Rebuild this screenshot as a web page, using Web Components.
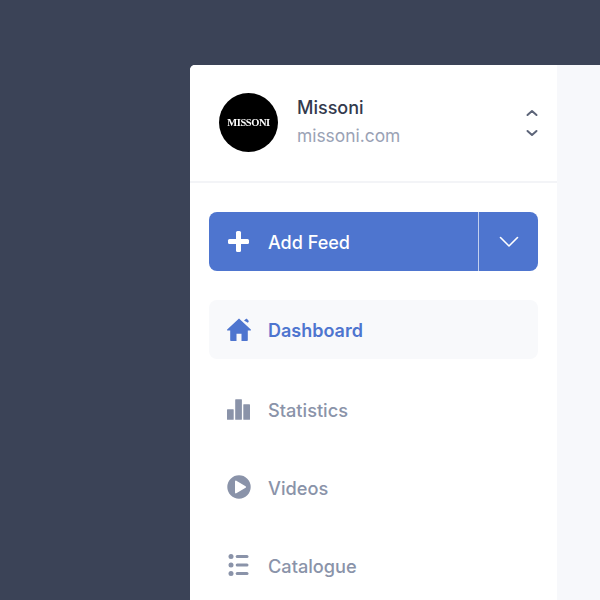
<!doctype html>
<html>
<head>
<meta charset="utf-8">
<style>
  html,body{ margin:0; height:100%; overflow:hidden; background:#3b4357; }
</style>
</head>
<body>
<app-shell>
  <account-header name="Missoni" site="missoni.com"></account-header>
  <add-feed-button label="Add Feed"></add-feed-button>
  <side-nav>
    <nav-item label="Dashboard" active>
      <svg slot="icon" width="26" height="26" viewBox="0 0 26 26" fill="currentColor"><path d="M13 1.500 1.200 12.600c-.4.4-.1 1 .4 1H4.200V23c0 .6.4 1 1 1h5.300v-7.200h5V24h5.300c.6 0 1-.4 1-1v-9.400h2.600c.5 0 .8-.6.4-1z"/><path d="M18 3.400l2.200-1.600c.3-.2.7-.2.9.1l1.500 1.900c.2.3.2.7 0 1l-.7 1z"/></svg>
    </nav-item>
    <nav-item label="Statistics">
      <svg slot="icon" width="26" height="26" viewBox="0 0 26 26" fill="currentColor"><rect x="1" y="13.200" width="6.700" height="10.600" rx=".6"/><rect x="9.200" y="3.200" width="6.700" height="20.600" rx=".6"/><rect x="17.300" y="8.200" width="6.700" height="15.600" rx=".6"/></svg>
    </nav-item>
    <nav-item label="Videos">
      <svg slot="icon" width="26" height="26" viewBox="0 0 26 26"><path fill="currentColor" fill-rule="evenodd" d="M13 1.300a11.700 11.700 0 1 1 0 23.400a11.700 11.700 0 0 1 0-23.400zM9 7.500v11c0 .7.7 1.100 1.300.8l9.300-5.500c.6-.3.6-1.200 0-1.600L10.300 6.700c-.6-.3-1.300.1-1.300.8z"/></svg>
    </nav-item>
    <nav-item label="Catalogue">
      <svg slot="icon" width="26" height="26" viewBox="0 0 26 26" fill="currentColor"><circle cx="5" cy="4.500" r="2.500"/><circle cx="5" cy="13" r="2.500"/><circle cx="5" cy="21.500" r="2.500"/><rect x="9.700" y="3" width="12.800" height="3" rx="1.500"/><rect x="9.700" y="11.500" width="12.800" height="3" rx="1.500"/><rect x="9.700" y="20" width="12.800" height="3" rx="1.500"/></svg>
    </nav-item>
  </side-nav>
</app-shell>

<script>
(() => {
  const FONT = 'Inter, "Liberation Sans", sans-serif';

  class AppShell extends HTMLElement {
    constructor(){
      super();
      this.attachShadow({mode:'open'}).innerHTML = `
        <style>
          :host{ display:block; box-sizing:border-box; height:600px; padding:65px 0 0 190px; overflow:hidden; font-family:${FONT}; }
          .win{ display:flex; height:600px; border-radius:5px 0 0 0; overflow:hidden; background:#f7f8fb; }
          .side{ flex:0 0 367px; background:#fff; }
          .body{ padding:29px 19px 0; display:flex; flex-direction:column; gap:29px; }
          .rest{ flex:1; }
        </style>
        <div class="win">
          <div class="side">
            <slot name="head"></slot>
            <div class="body"><slot></slot></div>
          </div>
          <div class="rest"></div>
        </div>`;
    }
    connectedCallback(){
      const h = this.querySelector('account-header');
      if (h) h.slot = 'head';
    }
  }

  class AccountHeader extends HTMLElement {
    constructor(){
      super();
      this.attachShadow({mode:'open'});
    }
    connectedCallback(){
      const name = this.getAttribute('name'), site = this.getAttribute('site');
      this.shadowRoot.innerHTML = `
        <style>
          :host{ display:block; }
          .row{ display:flex; align-items:center; height:116px; padding:0 19px 0 29px; border-bottom:2px solid #f3f4f7; }
          .logo{ width:59px; height:59px; border-radius:50%; background:#000; color:#fff; display:grid; place-items:center;
                 font:700 10.5px "Liberation Serif", serif; letter-spacing:-.45px; flex:none; margin-top:-1px; will-change:transform; }
          .txt{ margin-left:19px; flex:1; margin-top:-3px; }
          .n{ font-size:18px; font-weight:500; line-height:24px; color:#333a4d; }
          .s{ font-size:17.4px; line-height:24px; margin-top:4px; color:#9aa2b5; }
          .sw{ display:flex; flex-direction:column; gap:12px; color:#5d6579; margin-top:-1px; }
          svg{ display:block; }
        </style>
        <div class="row">
          <div class="logo">${name.toUpperCase()}</div>
          <div class="txt"><div class="n">${name}</div><div class="s">${site}</div></div>
          <div class="sw">
            <svg width="12" height="8" viewBox="0 0 12 8" fill="none" stroke="currentColor" stroke-width="2" stroke-linecap="round" stroke-linejoin="round"><path d="M1.500 6 6 2l4.500 4"/></svg>
            <svg width="12" height="8" viewBox="0 0 12 8" fill="none" stroke="currentColor" stroke-width="2" stroke-linecap="round" stroke-linejoin="round"><path d="M1.500 2 6 6l4.500-4"/></svg>
          </div>
        </div>`;
    }
  }

  class AddFeedButton extends HTMLElement {
    constructor(){
      super();
      this.attachShadow({mode:'open'});
    }
    connectedCallback(){
      this.shadowRoot.innerHTML = `
        <style>
          :host{ display:block; }
          .btn{ display:flex; height:59px; border-radius:8px; overflow:hidden; background:#4e75cf; color:#fff; }
          .main{ flex:1; display:flex; align-items:center; gap:18px; padding-left:18px; border-right:1px solid #c3d0ee; }
          .lbl{ font-size:18px; font-weight:500; padding-top:2px; }
          .more{ flex:0 0 59px; display:grid; place-items:center; }
          svg{ display:block; }
        </style>
        <div class="btn">
          <div class="main">
            <svg width="23" height="23" viewBox="0 0 23 23" fill="#fff"><rect x="9" y="1" width="5" height="21" rx="1.500"/><rect x="1" y="9" width="21" height="5" rx="1.500"/></svg>
            <span class="lbl">${this.getAttribute('label')}</span>
          </div>
          <div class="more">
            <svg width="20" height="12" viewBox="0 0 20 12" fill="none" stroke="#fff" stroke-width="1.600" stroke-linecap="round" stroke-linejoin="round"><path d="M1.500 1.500 10 10l8.500-8.500"/></svg>
          </div>
        </div>`;
    }
  }

  class SideNav extends HTMLElement {
    constructor(){
      super();
      this.attachShadow({mode:'open'}).innerHTML = `
        <style>:host{ display:flex; flex-direction:column; gap:19px; }</style>
        <slot></slot>`;
    }
  }

  class NavItem extends HTMLElement {
    constructor(){
      super();
      this.attachShadow({mode:'open'});
    }
    connectedCallback(){
      this.shadowRoot.innerHTML = `
        <style>
          :host{ display:flex; align-items:center; gap:16px; height:59px; padding:0 17px; border-radius:8px; color:#8a93a9; }
          :host([active]){ background:#f8f9fb; color:#4e75cf; margin-bottom:1px; }
          :host([active]) .lbl{ font-size:18px; font-weight:600; }
          .lbl{ font-size:18.2px; font-weight:500; padding-top:2px; }
          ::slotted(svg){ display:block; flex:none; }
        </style>
        <slot name="icon"></slot>
        <span class="lbl">${this.getAttribute('label')}</span>`;
    }
  }

  customElements.define('app-shell', AppShell);
  customElements.define('account-header', AccountHeader);
  customElements.define('add-feed-button', AddFeedButton);
  customElements.define('side-nav', SideNav);
  customElements.define('nav-item', NavItem);
})();
</script>
</body>
</html>
